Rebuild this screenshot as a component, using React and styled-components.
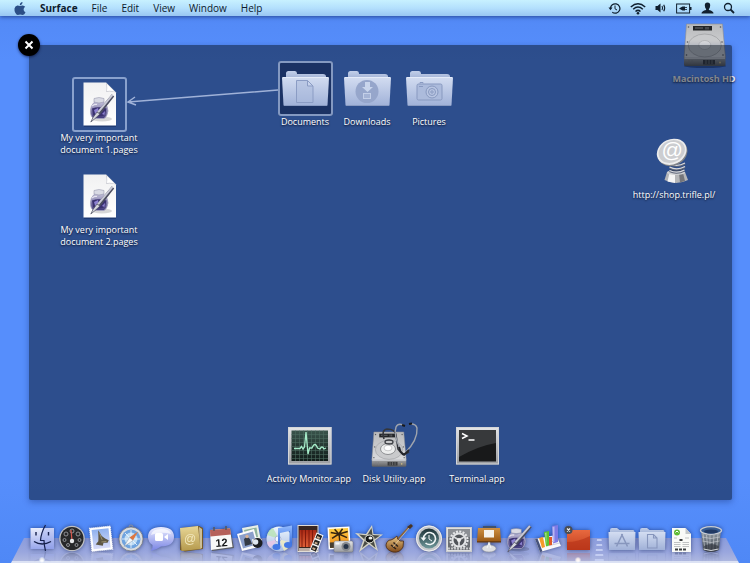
import React from "react";
import styled, { createGlobalStyle, css } from "styled-components";

const GlobalStyle = createGlobalStyle`
  * {
    box-sizing: border-box;
  }

  body {
    margin: 0;
    font-family: "Open Sans", "Noto Sans", sans-serif;
    background: #568efc;
  }

  button {
    margin: 0;
    padding: 0;
    border: 0;
    background: none;
    font: inherit;
    color: inherit;
    cursor: default;
  }
`;

const Desktop = styled.div`
  display: flex;
  flex-direction: column;
  min-height: 100vh;
  overflow: hidden;
  background: linear-gradient(#5288f4, #568efc 60px, #568efc 85%, #4f88f6);
`;

const MenuBar = styled.header`
  display: flex;
  align-items: center;
  justify-content: space-between;
  height: 16px;
  padding: 0 15px 0 14px;
  background: linear-gradient(#c8f1ff, #b4e0fd 50%, #98c6f2);
  box-shadow: 0 1px 4px rgba(10, 30, 90, 0.6);
`;

const Menus = styled.nav`
  display: flex;
  align-items: center;
  gap: 14px;
  font-size: 10px;
  line-height: 16px;
  color: #0c1a2c;
`;

const MenuButton = styled.button`
  font-weight: ${(props) => (props.$bold ? 700 : 500)};
`;

const StatusIcons = styled.div`
  display: flex;
  align-items: center;
  gap: 9px;
  color: #10202f;
`;

const StatusButton = styled.button`
  display: flex;

  svg {
    display: block;
  }
`;

const Stage = styled.main`
  position: relative;
  display: flex;
  flex: 1;
  padding: 29px 18px 0 29px;
`;

const Surface = styled.section`
  position: relative;
  flex: 1;
  min-height: 455px;
  border-radius: 2px;
  background: rgba(4, 13, 29, 0.5);
  box-shadow: 0 2px 6px rgba(10, 30, 90, 0.35);
`;

const CloseButton = styled.button`
  position: absolute;
  top: -11px;
  left: -11px;
  display: flex;
  width: 22px;
  height: 22px;
  border-radius: 50%;
  background: #000;
  box-shadow: 0 1px 3px rgba(0, 0, 30, 0.6);

  svg {
    margin: auto;
  }
`;

const DesktopItem = styled.button`
  position: absolute;
  top: ${(props) => props.$top}px;
  bottom: ${(props) => props.$bottom}px;
  left: ${(props) => props.$left}px;
  right: ${(props) => props.$right}px;
  display: flex;
  flex-direction: column;
  align-items: center;
  width: 90px;
`;

const IconFrame = styled.span`
  display: block;
  width: 55px;
  height: 55px;
  border-radius: 3px;

  ${(props) =>
    props.$selected &&
    css`
      box-shadow: inset 0 0 0 2px rgba(176, 196, 232, 0.7);
    `}

  ${(props) =>
    props.$active &&
    css`
      background: rgba(10, 22, 60, 0.5);
    `}

  svg {
    display: block;
    width: 55px;
    height: 55px;
  }
`;

const ItemLabel = styled.span`
  font-size: 9px;
  font-weight: ${(props) => (props.$bold ? 700 : 500)};
  line-height: 12px;
  color: #fff;
  text-align: center;
  white-space: pre-line;
  text-shadow: 0 1px 2px rgba(0, 0, 20, 0.8);
`;

const Arrow = styled.svg`
  position: absolute;
  top: 42px;
  left: 97px;
`;

const Dock = styled.footer`
  display: grid;
  height: 63px;
`;

const Shelf = styled.div`
  grid-area: 1 / 1;
  align-self: end;
  height: 25px;
  margin: 0 11px;
  background: linear-gradient(#8b9cdc, #99a6de 55%, #adb7e0 92%, #dce2f4 93%);
  clip-path: polygon(13px 0, calc(100% - 13px) 0, 100% 100%, 0 100%);
`;

const DockItems = styled.div`
  z-index: 1;
  grid-area: 1 / 1;
  display: flex;
  align-items: flex-end;
  padding: 0 24px 0 27px;
`;

const DockItem = styled.button`
  display: flex;
  flex: 1;
  flex-direction: column;
  align-items: center;
  gap: 4px;
`;

const DockIcon = styled.svg`
  width: 28px;
  height: 28px;
  overflow: visible;
  filter: drop-shadow(0 0 2px rgba(10, 25, 80, 0.6));
  -webkit-box-reflect: below -3px linear-gradient(transparent 55%, rgba(0, 0, 0, 0.3));
`;

const RunningLight = styled.span`
  width: 6px;
  height: 6px;
  border-radius: 50%;
  background: ${(props) => (props.$on ? "radial-gradient(#fff 30%, rgba(190, 220, 255, 0.2) 80%)" : "none")};
`;

const Divider = styled.span`
  align-self: flex-end;
  width: 14px;
  height: 24px;
  background: repeating-linear-gradient(#c3cdf2 0 2px, transparent 2px 5px);
  clip-path: polygon(30% 0, 62% 0, 80% 100%, 12% 100%);
`;

const gradients = [
  ["gFolder", "#d3ddf1", "#a0b1d8"],
  ["gFolderBack", "#c2cfe9", "#98aad0"],
  ["gPaper", "#f1f1f2", "#ffffff"],
  ["gMetal", "#e4e5e7", "#9b9da1"],
  ["gDrive", "#b9babc", "#dadbdd"],
  ["gDriveFront", "#a0a1a3", "#5d5e61"],
  ["gInk", "#c2bfda", "#40387a"],
  ["gGreen", "#3a544c", "#101b19"],
  ["gFinder", "#e9edfc", "#98a7ec"],
  ["gBubble", "#eceeff", "#7782e4"],
  ["gBook", "#e8d797", "#b5994c"],
  ["gDisc", "#eef7ff", "#a9bce2"],
  ["gNote", "#91baff", "#2c64d8"],
  ["gSky", "#8fb1ef", "#d8dbf8"],
  ["gSunset", "#ffcf42", "#ee8418"],
  ["gRed", "#e8693f", "#c23f1f"],
  ["gCurtain", "#a92915", "#df6038"],
  ["gGuitar", "#ecc985", "#7d4718"],
  ["gTeal", "#1c3136", "#6f989b"],
  ["gWood", "#cf9144", "#9b5b18"],
  ["gBin", "#98a1ab", "#3d444e"],
];

function Gradients() {
  return (
    <svg width="0" height="0" display="block" aria-hidden="true">
      <defs>
        {gradients.map(([id, from, to]) => (
          <linearGradient key={id} id={id} x1="0" y1="0" x2="0" y2="1">
            <stop offset="0" stopColor={from} />
            <stop offset="1" stopColor={to} />
          </linearGradient>
        ))}
      </defs>
    </svg>
  );
}

/* ---------- desktop icons, 55 x 55 ---------- */

// ink bottle with a fountain pen across it, drawn in a 24 x 28 box
function InkAndPen() {
  return (
    <g>
      <ellipse cx="13" cy="24" rx="10" ry="2.5" fill="#000" opacity="0.15" />
      <path d="M5 3.5 Q10 1.5 15 3.5 L15 7 Q10 9 5 7Z" fill="#d9dae4" stroke="#8d8fa4" strokeWidth="0.5" />
      <path d="M5 7.5 Q10 9.5 15 7.5 Q19 11 19 16 Q18 22 15 23.5 L5 23.5 Q1.5 22 1.5 16 Q1.5 11 5 7.5Z" fill="url(#gInk)" stroke="#a5a3c0" strokeWidth="0.9" />
      <path d="M3 13.500 Q10 11 17.500 13.500 L16 20 Q10 23 4 20Z" fill="#3a3170" />
      <path d="M5 15 L9 13 L10 17 L6.500 20Z" fill="#8d82d0" />
      <path d="M13 19 L16 16 L15.500 20Z" fill="#8d82d0" />
      <path d="M3.2 11 Q5 9 8 9.5" fill="none" stroke="#fff" strokeWidth="1.2" opacity="0.7" />
      <path d="M22.800 -0.800 L25.200 1.400 L11.200 19.200 L8 17Z" fill="#4c4e60" />
      <path d="M22.800 -0.800 L24.200 0.500 L9.800 18 L8 17Z" fill="#c9cad6" />
      <path d="M8 17 L11 19 L5.5 24 L1.8 27 L4 22.5Z" fill="#d6d7de" stroke="#4b4c5d" strokeWidth="0.7" />
    </g>
  );
}

function PagesDocument() {
  return (
    <svg viewBox="0 0 55 55">
      <path d="M12 6 H34 L44 16 V49 H12Z" fill="#0a1a46" opacity="0.35" transform="translate(0 1)" />
      <path d="M11.500 5.500 H34 L44 15.500 V48.500 H11.500Z" fill="url(#gPaper)" />
      <path d="M34 5.500 Q35 13 34 15 Q38 14 44 15.500Z" fill="#c9cad1" />
      <path d="M35 7 Q35.500 12 35 14 Q39 13 43 15Z" fill="#fff" />
      <g transform="translate(17 18)">
        <InkAndPen />
      </g>
    </svg>
  );
}

function FolderShape() {
  return (
    <g>
      <path d="M8 19 V12.500 Q8 10 10.500 10 H17 Q19 10 19 12.500 V13 H45 Q48 13 48 15.500 V20 H8Z" fill="url(#gFolderBack)" />
      <path d="M5 16 H50 Q51 16 51 17 L49.500 44 Q49.400 45 48.500 45 H6.500 Q5.600 45 5.500 44 L4 17 Q4 16 5 16Z" fill="url(#gFolder)" />
      <path d="M5 16.500 H50" stroke="#e9effb" strokeWidth="0.8" />
      <path d="M6 44.500 H49" stroke="#8395bd" strokeWidth="0.8" />
    </g>
  );
}

function DocumentsFolder() {
  return (
    <svg viewBox="0 0 55 55">
      <FolderShape />
      <path d="M18.500 19.500 H29.500 L35 25 V41.500 H18.500Z M29.500 19.500 V25 H35" fill="#a9b9dc" fillOpacity="0.5" stroke="#8b9cc4" strokeWidth="1" />
    </svg>
  );
}

function DownloadsFolder() {
  return (
    <svg viewBox="0 0 55 55">
      <FolderShape />
      <circle cx="27" cy="30.500" r="11.500" fill="#96a6cb" />
      <path d="M25 21 H30 V26 H33 L27.500 31 L22 26 H25Z" fill="#c9d5ec" />
      <rect x="23.500" y="32.500" width="7" height="5" fill="#a4b3d5" stroke="#c3cfe8" />
    </svg>
  );
}

function PicturesFolder() {
  return (
    <svg viewBox="0 0 55 55">
      <FolderShape />
      <g fill="none" stroke="#8899c0">
        <rect x="15" y="23" width="25" height="16" rx="1.500" fill="#acbbdc" />
        <path d="M18 22.500 V21.500 H21 V22.500" />
        <circle cx="30" cy="31" r="6" fill="#b8c5e2" />
        <circle cx="30" cy="31" r="3.500" />
        <circle cx="30" cy="31" r="1.200" />
        <path d="M17 25.500 H21" />
      </g>
    </svg>
  );
}

function DriveBody() {
  return (
    <g>
      <path d="M9.500 6 H45.500 L48.500 40 H7Z" fill="url(#gDrive)" stroke="#8b8c8f" strokeWidth="0.6" />
      <path d="M7 40 H48.500 V46.500 Q48.500 48 47 48 H8.500 Q7 48 7 46.500Z" fill="url(#gDriveFront)" />
      <path d="M7.500 40.300 H48" stroke="#efeff0" strokeWidth="0.7" />
      <ellipse cx="27.800" cy="27.500" rx="16.500" ry="11.500" fill="#c9cacc" stroke="#a1a2a5" strokeWidth="0.8" />
      <ellipse cx="27.800" cy="27" rx="6" ry="4.500" fill="#d8d9db" stroke="#b0b1b4" strokeWidth="0.8" />
      <rect x="16" y="8" width="19" height="4.500" fill="#222427" />
      <path d="M18 10 H26 M29 9 V11.500 M31 9 V11.500" stroke="#8d9094" strokeWidth="0.7" />
      <g fill="#57585b">
        <circle cx="11.500" cy="9" r="0.800" />
        <circle cx="43.500" cy="9" r="0.800" />
        <circle cx="10.500" cy="24" r="0.800" />
        <circle cx="45" cy="24" r="0.800" />
        <circle cx="9.500" cy="37" r="0.800" />
        <circle cx="46" cy="37" r="0.800" />
      </g>
      <path d="M26 42 H38 V46.500 H26Z" fill="#3a3b3e" />
      <path d="M29 42 V46 M32 42 V46 M35 42 V46" stroke="#7e8083" strokeWidth="0.8" />
      <path d="M12 42 V46 M15 42 V46" stroke="#7d7e81" strokeWidth="0.6" />
      <circle cx="43" cy="44.500" r="1" fill="#c7b787" />
    </g>
  );
}

function HardDrive() {
  return (
    <svg viewBox="0 0 55 55">
      <ellipse cx="28" cy="48" rx="21" ry="2" fill="#001040" opacity="0.4" />
      <DriveBody />
    </svg>
  );
}

function WebLocation() {
  return (
    <svg viewBox="0 0 55 55">
      <path d="M20 38 Q29 35 38 38 L41 46 Q29 52 17.500 46Z" fill="#b4b5b8" />
      <path d="M22.500 39 L20.500 47.500 L28 49 V39Z" fill="#f4f4f5" />
      <path d="M32 39 H36 L38 47 L33 48.500Z" fill="#74757a" />
      <ellipse cx="29" cy="38.500" rx="9" ry="2.500" fill="#cfd0d3" />
      <ellipse cx="30" cy="36" rx="7" ry="2" fill="#33415f" />
      <g fill="none" stroke="#5b6377" strokeWidth="2.200">
        <path d="M22.500 30 Q30 34 38 29.500 M22.500 33.500 Q30 37.500 38 33 M22.500 37 Q30 40.500 37.500 36.500" />
      </g>
      <g fill="none" stroke="#d7d9df" strokeWidth="1.300">
        <path d="M22.500 29.500 Q30 33.500 38 29 M22.500 33 Q30 37 38 32.500 M22.500 36.500 Q30 40 37.500 36" />
      </g>
      <ellipse cx="25.500" cy="18.800" rx="15.400" ry="12.800" transform="rotate(-26 25.500 18.800)" fill="#808287" />
      <ellipse cx="24.700" cy="17.800" rx="15.400" ry="12.500" transform="rotate(-26 24.700 17.800)" fill="#ececed" />
      <ellipse cx="24.700" cy="17.500" rx="13.600" ry="10.800" transform="rotate(-26 24.700 17.500)" fill="#cccdd0" />
      <text x="25" y="23" fontSize="21" fontFamily="Liberation Sans, sans-serif" fontStyle="italic" textAnchor="middle" fill="#fff">
        @
      </text>
    </svg>
  );
}

function ActivityMonitor() {
  return (
    <svg viewBox="0 0 55 55">
      <rect x="6" y="9" width="43.500" height="37.500" fill="url(#gMetal)" />
      <rect x="6.500" y="9.500" width="42.500" height="36.500" fill="none" stroke="#d4d6d9" />
      <rect x="9.500" y="12.500" width="36.500" height="30.500" fill="url(#gGreen)" />
      <path
        d="M13.500 12.500 V43 M17.500 12.500 V43 M21.500 12.500 V43 M25.500 12.500 V43 M29.500 12.500 V43 M33.500 12.500 V43 M37.500 12.500 V43 M41.500 12.500 V43 M9.500 16.500 H46 M9.500 20.500 H46 M9.500 24.500 H46 M9.500 28.500 H46 M9.500 32.500 H46 M9.500 36.500 H46 M9.500 40.500 H46"
        stroke="#4b6b5f"
        strokeWidth="0.6"
      />
      <path d="M12 30.500 H18 L19.500 28.500 L21 31 L22.500 29 L24 14 L26 36 L27.500 30 H30 Q33 23 35.500 30 L38 31 Q40 27 42 31 L44 30" fill="none" stroke="#a6ecc9" strokeWidth="1.300" />
    </svg>
  );
}

function Terminal() {
  return (
    <svg viewBox="0 0 55 55">
      <rect x="6" y="9" width="43" height="37.500" fill="url(#gMetal)" />
      <rect x="6.500" y="9.500" width="42" height="36.500" fill="none" stroke="#d4d6d9" />
      <rect x="9" y="12" width="37" height="31.500" fill="#18191a" />
      <path d="M9 12 H46 V25 Q28 28 9 39Z" fill="#37393b" />
      <path d="M12 15.500 L17 18 L12 20.500" fill="none" stroke="#fff" strokeWidth="1.500" />
      <path d="M18.500 22 H24.500" stroke="#fff" strokeWidth="1.500" />
    </svg>
  );
}

function DiskUtility() {
  return (
    <svg viewBox="0 0 55 55">
      <g transform="translate(-1 9) scale(0.83)">
        <DriveBody />
      </g>
      <ellipse cx="21" cy="31" rx="7.500" ry="5.500" fill="#eceded" stroke="#8d8f92" />
      <ellipse cx="21" cy="30" rx="4" ry="2.800" fill="#fff" stroke="#b5b6b8" strokeWidth="0.7" />
      <path d="M17 21 Q14 12 20 11 Q28 11 29 17 L31 31 Q36 39 42 34" fill="none" stroke="#34363c" strokeWidth="1.600" />
      <ellipse cx="22" cy="24" rx="4" ry="2" fill="none" stroke="#3c3e43" strokeWidth="1.300" />
      <path d="M34 32 Q26 17 29 9 Q31 5 36 7 M38 35 Q51 22 50 10 Q49 6 44 6" fill="none" stroke="#9fa4ad" strokeWidth="1.400" />
      <path d="M35 7 L38 8 M42 6 L45 5.500" stroke="#17191d" strokeWidth="2" />
      <path d="M32 29 Q34 36 37 37 L42 32" fill="none" stroke="#24262b" strokeWidth="1.800" />
    </svg>
  );
}

/* ---------- dock icons, 28 x 28 ---------- */

function Finder() {
  return (
    <g>
      <rect x="2.500" y="3" width="23.500" height="21" fill="url(#gFinder)" />
      <path d="M15 3 H26 V24 H17 L16 18 H13 Q13 9 15 3Z" fill="#7f90e4" opacity="0.3" />
      <path d="M17.500 0 Q13 8 12.500 15.500 H16 Q16 20 17.500 26" fill="none" stroke="#15204c" strokeWidth="1.200" />
      <path d="M8 7 V10.500 M20.500 7 V10.500 M6 16.500 Q14 21.500 23 16.500" fill="none" stroke="#15204c" strokeWidth="1.400" />
    </g>
  );
}

function Dashboard() {
  return (
    <g>
      <circle cx="14" cy="13.500" r="12.800" fill="#bfc0c3" />
      <circle cx="14" cy="13.500" r="11.500" fill="#27282a" />
      <g fill="none" stroke="#999b9f" strokeWidth="0.9">
        <circle cx="14" cy="6" r="2" />
        <circle cx="8" cy="9" r="2" />
        <circle cx="20" cy="9" r="2" />
        <circle cx="6.500" cy="15" r="1.500" />
        <circle cx="21.500" cy="15" r="1.500" />
        <circle cx="10" cy="20" r="1.500" />
        <circle cx="18.500" cy="20" r="1.500" />
      </g>
      <path d="M14 16 L13 5" stroke="#d9564a" strokeWidth="1.200" />
      <circle cx="14" cy="16" r="2.200" fill="#e7e8ea" />
    </g>
  );
}

function Mail() {
  return (
    <g transform="rotate(-6 14 13)">
      <rect x="3.500" y="2" width="21" height="23.500" fill="#fff" stroke="#eef0fa" strokeDasharray="1 1" />
      <rect x="5.500" y="4" width="17" height="19.500" fill="url(#gSky)" />
      <path d="M12 5 L15 11 L18 14 L21.500 16 L20 18.500 L16 18 L15 21 L12 20 L8 19 L11 16 L11.500 12Z" fill="#5d5644" />
      <path d="M13 8 L15 15 M14 17 L19 17" stroke="#9c906f" strokeWidth="0.9" />
    </g>
  );
}

function Safari() {
  return (
    <g>
      <circle cx="14" cy="2" r="2" fill="none" stroke="#8c8f96" />
      <circle cx="14" cy="14" r="12" fill="#dadcdf" stroke="#777b83" strokeWidth="0.8" />
      <circle cx="14" cy="14" r="9.500" fill="#6fa3df" />
      <circle cx="14" cy="14" r="6.500" fill="#bedcf5" />
      <path d="M14 5 V23 M5 14 H23 M8 8 L20 20" stroke="#f1f7fd" strokeWidth="0.8" />
      <path d="M21 6.500 L16 15.500 L12.500 12.500Z" fill="#de763e" />
      <path d="M7 21.500 L12.500 12.500 L16 15.500Z" fill="#f6f7f8" stroke="#73889e" strokeWidth="0.4" />
    </g>
  );
}

function IChat() {
  return (
    <g>
      <path d="M14 2 Q27 2 27 12 Q27 21 14 21.500 Q9 25 4 26 Q6 23 5.500 20 Q1 17 1 12 Q1 2 14 2Z" fill="url(#gBubble)" />
      <path d="M4 10 Q5 4 14 4 Q23 4 24 9 Q14 6 4 10Z" fill="#fff" opacity="0.65" />
      <rect x="8" y="8" width="8" height="8" rx="1.500" fill="#fff" />
      <path d="M17 12 L21 9 V15Z" fill="#fff" />
    </g>
  );
}

function AddressBook() {
  return (
    <g>
      <path d="M4 3 L22 1 L26 3 V24 L8 26.500 L3 25Z" fill="#755a28" />
      <path d="M22 2 L25 4 V23 L23 24Z" fill="#cdbf96" />
      <path d="M3 3 L21 1 L23.500 24 L4.500 26Z" fill="url(#gBook)" />
      <text x="13" y="17.500" textAnchor="middle" fontSize="12" fontFamily="Liberation Sans, sans-serif" fill="#f1e6ba">
        @
      </text>
    </g>
  );
}

function Calendar() {
  return (
    <g>
      <path d="M4 5 L23 3 L27 23 L5 26Z" fill="#5c5e63" />
      <path d="M3 5 L23 3.500 L25.500 22 L4 25Z" fill="#f8f8f8" />
      <path d="M3 5 L23 3.500 L24 9.500 L3.300 11.500Z" fill="#b5605a" />
      <path d="M7 2 V6 M19 1 V5" stroke="#55575c" strokeWidth="1.500" />
      <text x="14.500" y="21.500" transform="rotate(-4 14 18)" textAnchor="middle" fontSize="11" fontWeight="700" fontFamily="Liberation Sans, sans-serif" fill="#17181a">
        12
      </text>
    </g>
  );
}

function Preview() {
  return (
    <g>
      <path d="M6 3 L22 0 L25 16 L9 19Z" fill="#e7efe7" />
      <path d="M8 5 L20.500 2.500 L22 12 L10 14Z" fill="#8fb39c" />
      <path d="M1 9 L18 4 L23 22 L6 26Z" fill="#fbfbfc" />
      <path d="M3 10.500 L17 6.500 L20.500 19.500 L7 23.500Z" fill="#8b9fcb" />
      <path d="M8 14 L11 11.500 L14 14 L16 19 L9 21Z" fill="#343a45" />
      <circle cx="11" cy="11.500" r="1.700" fill="#d8b295" />
      <path d="M16 14 H26 V20 H16Z" fill="#dfe2e8" />
      <circle cx="21.500" cy="18" r="5" fill="#1b1d22" />
      <circle cx="19.500" cy="17" r="2.800" fill="#dfe6f0" />
    </g>
  );
}

function ITunes() {
  return (
    <g>
      <circle cx="13" cy="14" r="12.500" fill="url(#gDisc)" />
      <path d="M13 14 L1 10 Q3 4 7 3Z" fill="#b6e2b3" opacity="0.8" />
      <path d="M13 14 L4 23 Q1 20 1 17Z" fill="#e6c6e7" opacity="0.9" />
      <path d="M13 14 L18 26 Q23 24 25 18Z" fill="#f3eebe" opacity="0.8" />
      <circle cx="12" cy="14" r="3" fill="#f5f7ff" stroke="#9fadd0" strokeWidth="0.8" />
      <path d="M12 3 L26 0.500 V20 H23.500 V6 L14 8 V22 H12Z" fill="url(#gNote)" />
      <ellipse cx="10.500" cy="22" rx="4" ry="3" fill="#4378e5" />
      <ellipse cx="22" cy="20" rx="4" ry="3" fill="#4378e5" />
    </g>
  );
}

function PhotoBooth() {
  return (
    <g>
      <rect x="1.500" y="0" width="21" height="27" fill="#e1dcd6" />
      <rect x="2.500" y="1" width="19" height="25" fill="#392620" />
      <rect x="3.500" y="5" width="17" height="17" fill="url(#gCurtain)" />
      <path d="M6 5 V22 M9.500 5 V22 M13 5 V22 M16.500 5 V22" stroke="#78150a" strokeWidth="0.9" />
      <path d="M3 23 H21 V26 H3Z" fill="#bcaea6" />
      <g transform="rotate(22 20 17)">
        <rect x="17" y="8" width="7.500" height="19" fill="#f7f7f7" />
        <path d="M18 9 H23.500 V13.500 H18Z M18 15 H23.500 V19.500 H18Z M18 21 H23.500 V26 H18Z" fill="#24231f" />
        <path d="M19 12 H22 M19 18 H22 M19 24 H22" stroke="#c8aa8c" strokeWidth="2" />
      </g>
    </g>
  );
}

function IPhoto() {
  return (
    <g>
      <g transform="rotate(-3 13 12)">
        <rect x="2" y="2" width="22" height="22" fill="#fff" />
        <rect x="3.500" y="3.500" width="19" height="19" fill="url(#gSunset)" />
        <path d="M13 22 Q14 14 13 9 M13 9 L5 7 M13 9 L6 13 M13 9 L9 4 M13 9 L17 4 M13 9 L22 7 M13 9 L21 13" fill="none" stroke="#362510" strokeWidth="1.500" />
        <path d="M3.500 17 H22.500 V22.500 H3.500Z" fill="#483f31" />
      </g>
      <rect x="8" y="16" width="19" height="11" rx="1.500" fill="url(#gMetal)" stroke="#74777c" strokeWidth="0.5" />
      <circle cx="20" cy="21.500" r="4.500" fill="#85888e" />
      <circle cx="20" cy="21.500" r="2.500" fill="#26344a" />
      <rect x="9.500" y="17.500" width="4" height="2" fill="#f6f6f7" />
    </g>
  );
}

function IMovie() {
  return (
    <g>
      <path d="M17 0 L18.500 9 L28 9.500 L20 15.500 L23 26 L14 19.500 L4 27 L8 15.500 L0 8 L11 9Z" fill="#d3d2c5" />
      <path d="M16.500 3 L17.500 10 L25 10.500 L18.500 15 L20.500 23 L14 17.500 L7 23 L10 15 L4 9.500 L12 10.500Z" fill="#4a4c45" />
      <ellipse cx="14.500" cy="14" rx="4.500" ry="4" fill="#151716" stroke="#f4f3e7" strokeWidth="1" />
      <ellipse cx="15.500" cy="13" rx="2" ry="1.500" fill="#eff1eb" />
    </g>
  );
}

function GarageBand() {
  return (
    <g>
      <path d="M11 16 L25 1" stroke="#8a6238" strokeWidth="1.800" />
      <path d="M22 2 L26 -1 L28 1 L25 4Z" fill="#4a3423" />
      <path d="M12 11 L12.500 14 Q15 17 18.500 16 L18 22 Q15 28 8 27 Q1 25 1 20 Q2 15 6 15 Q9 14 12 11Z" fill="url(#gGuitar)" stroke="#4e2b10" strokeWidth="0.8" />
      <path d="M6 20 L11 24 M8.500 17.500 L13 21.500" stroke="#2d2119" strokeWidth="1.500" />
      <path d="M8 22 L24 3" stroke="#f0dfbe" strokeWidth="0.6" />
    </g>
  );
}

function TimeMachine() {
  return (
    <g>
      <circle cx="14" cy="13.500" r="13" fill="#c6c8cb" />
      <circle cx="14" cy="13.500" r="12.500" fill="none" stroke="#eeeff0" />
      <circle cx="14" cy="13.500" r="10" fill="url(#gTeal)" />
      <path d="M8.500 13.500 A6 6 0 1 1 10.500 18" fill="none" stroke="#f2f7f7" strokeWidth="1.600" />
      <path d="M5.500 12.500 H11.500 L8.500 16Z" fill="#f2f7f7" />
      <path d="M14 10 V14 L17 16" fill="none" stroke="#f2f7f7" strokeWidth="1" />
    </g>
  );
}

function SystemPreferences() {
  return (
    <g>
      <rect x="1" y="2" width="26" height="25" fill="#c8cacd" />
      <rect x="2.500" y="3.500" width="23" height="22" fill="#6c6f74" stroke="#efeff0" strokeWidth="0.8" />
      <path d="M3 4 H25 V12 H3Z" fill="#8c8f94" />
      <circle cx="14" cy="15" r="8.500" fill="none" stroke="#e6e7e9" strokeWidth="2.200" strokeDasharray="2 1.340" />
      <circle cx="14" cy="15" r="6.500" fill="#515459" stroke="#e3e4e6" strokeWidth="2" />
      <path d="M14 15 V21 M14 15 L9 12 M14 15 L19 12" stroke="#d7d8da" strokeWidth="1.800" />
      <circle cx="14" cy="15" r="2" fill="#efeff0" />
      <path d="M3 23.500 H25" stroke="#c7c8ca" strokeWidth="2" strokeDasharray="2 1" />
    </g>
  );
}

function Keynote() {
  return (
    <g>
      <path d="M8 1 H21 V4 H8Z" fill="#40526e" />
      <path d="M3 3 H25 L26 16 H2Z" fill="url(#gWood)" />
      <path d="M2 16 H26 V17.500 H2Z" fill="#6d3e12" />
      <rect x="9" y="5" width="10" height="7.500" fill="#f4f2ee" />
      <path d="M13 17.500 H15.500 V23 H13Z" fill="#9a9da3" />
      <ellipse cx="14" cy="23.500" rx="7" ry="3.500" fill="#dedfe3" stroke="#9a9da5" strokeWidth="0.6" />
      <path d="M12 23 L14 18 L16 23" fill="none" stroke="#f3f4f6" strokeWidth="1.200" />
    </g>
  );
}

function Pages() {
  return (
    <g transform="translate(2 1) scale(1.020 0.960)">
      <InkAndPen />
    </g>
  );
}

function Numbers() {
  return (
    <g>
      <path d="M1 14 L22 10 L27 21 L6 27Z" fill="#f9f9fa" />
      <path d="M1 14 L6 27 L8.500 26.500 L3.500 13.500Z" fill="#46527a" />
      <path d="M12 18 L25 15 M13 21 L26 18" stroke="#b6bccb" strokeWidth="0.7" />
      <path d="M5 13 L9 12 L11 22 L8 23Z" fill="#f39a28" />
      <path d="M10 7 L15 6 V20.500 L12 21.500Z" fill="#5cc431" />
      <path d="M15 12 L18 12 V20 L15 20.500Z" fill="#e15a28" />
      <path d="M18 1 L24 0 V17 L19 18.500Z" fill="#7f7be6" />
      <path d="M18.500 2 L20.500 1.500 V17 L19 17.500Z M11 8 L12.500 7.500 V20Z" fill="#fff" opacity="0.45" />
    </g>
  );
}

function SurfaceApp() {
  return (
    <g>
      <rect x="3" y="5" width="23" height="20" fill="url(#gRed)" />
      <path d="M3 17 Q14 17 26 11 V25 H3Z" fill="#b53218" opacity="0.6" />
      <circle cx="4.500" cy="5" r="4" fill="#4b4d52" />
      <path d="M3 3.500 L6 6.500 M6 3.500 L3 6.500" stroke="#f2f2f2" strokeWidth="1.100" />
    </g>
  );
}

function DockFolder({ children }) {
  return (
    <g>
      <path d="M2 6 V5 Q2 3 4 3 H9 L11.500 5 H25 Q26.500 5 26.500 7 V10 H2Z" fill="url(#gFolderBack)" />
      <path d="M0.500 7 H27.500 L27 25 H1Z" fill="url(#gFolder)" />
      <g fill="none" stroke="#8796bd" strokeWidth="1.100">
        {children}
      </g>
    </g>
  );
}

function ApplicationsStack() {
  return (
    <DockFolder>
      <path d="M14.500 9 L8.500 21.500 M13.500 9 L19.500 21.500 M6.500 18.500 H21.500" strokeWidth="1.500" />
    </DockFolder>
  );
}

function DocumentsStack() {
  return (
    <DockFolder>
      <path d="M9.500 9.500 H15.500 L19 13 V23 H9.500Z M15.500 9.500 V13 H19" />
    </DockFolder>
  );
}

function PaperStack() {
  return (
    <g>
      <path d="M5 3 H18.500 L24 9 V27 H5Z" fill="#f9faf8" />
      <path d="M18.500 3 V9 H24Z" fill="#c4c8ca" />
      <circle cx="10" cy="7.500" r="3" fill="#5ebb35" />
      <path d="M8.500 7.500 L10 6 L11.500 7.500" fill="none" stroke="#fff" />
      <path d="M7 13 H10 M18 13 H22 M7 17.500 H13.500 M15.500 17.500 H22 M7 19.500 H13.500 M15.500 19.500 H22 M7 21.500 H13.500 M15.500 21.500 H22" stroke="#b1b4b5" strokeWidth="0.8" />
      <path d="M12.500 15 H15.500 M8 24.500 H20" stroke="#3b3d3e" strokeWidth="2" strokeDasharray="3 1" />
    </g>
  );
}

function Trash() {
  return (
    <g>
      <path d="M4 5 L6 25 Q14 29 22 25 L24 5Z" fill="url(#gBin)" />
      <path d="M6 9 L8 25 M9.500 10 L11 26 M13 10 V26 M17 10 L16 26 M21 9 L19.500 25 M5 12 Q14 15 23 12 M5.500 16 Q14 19 22.500 16" fill="none" stroke="#ced2d7" strokeWidth="0.6" />
      <path d="M7 21 Q14 17 21.500 21 L21 25 Q14 28 7.500 25Z" fill="#363b43" opacity="0.7" />
      <path d="M6.500 24 Q14 27 21.500 24" fill="none" stroke="#d6d9dd" strokeWidth="1" />
      <ellipse cx="14" cy="5.500" rx="10.500" ry="3.800" fill="#365b91" stroke="#c8ccd2" strokeWidth="1.300" />
      <ellipse cx="14" cy="6.500" rx="7" ry="2" fill="#213963" />
    </g>
  );
}

/* ---------- menu bar icons ---------- */

function AppleLogo() {
  return (
    <svg width="12" height="13" viewBox="0 0 12 13" aria-hidden="true" display="block">
      <path
        d="M8.500 0 Q8.600 1.700 7.600 2.500 Q6.800 3.300 5.800 3.200 Q5.700 2 6.500 1.100 Q7.400 0.200 8.500 0Z M3.400 3.400 Q4.600 3.300 6 4 Q7.300 3.300 8.700 3.400 Q10.300 3.600 11.200 4.800 Q9.500 5.900 9.600 7.700 Q9.700 9.600 11.500 10.300 Q10.500 12.900 8.800 13 Q7.500 12.500 6.200 12.500 Q5 12.500 3.800 13 Q2.500 13 1.300 10.800 Q0.200 8.500 0.500 6.500 Q1 3.700 3.400 3.400Z"
        fill="#2c4f87"
      />
    </svg>
  );
}

function BackupStatus() {
  return (
    <svg width="13" height="13" viewBox="0 0 13 13" fill="none" stroke="currentColor">
      <path d="M2.500 6.500 A4.700 4.700 0 1 1 4.300 10.200" strokeWidth="1.200" />
      <path d="M0.500 5.500 H4.500 L2.500 8.300Z" fill="currentColor" stroke="none" />
      <path d="M7 3.500 V6.800 L9 8" strokeWidth="1" />
    </svg>
  );
}

function WifiStatus() {
  return (
    <svg width="16" height="13" viewBox="0 0 16 13" fill="none" stroke="currentColor" strokeWidth="1.500">
      <path d="M0.800 5 Q8 -1.500 15.200 5 M3.200 7.300 Q8 2.800 12.800 7.300 M5.500 9.500 Q8 7.200 10.500 9.500" />
      <circle cx="8" cy="11.200" r="1.300" fill="currentColor" stroke="none" />
    </svg>
  );
}

function VolumeStatus() {
  return (
    <svg width="12" height="12" viewBox="0 0 12 12" fill="none" stroke="currentColor" strokeWidth="1.100">
      <path d="M0.500 4 H2.500 L5.500 1.500 V10.500 L2.500 8 H0.500Z" fill="currentColor" stroke="none" />
      <path d="M7 4 Q8.200 6 7 8 M8.700 2.700 Q10.700 6 8.700 9.300" />
    </svg>
  );
}

function BatteryStatus() {
  return (
    <svg width="16" height="11" viewBox="0 0 16 11" fill="none" stroke="currentColor">
      <rect x="0.600" y="1" width="13" height="9" strokeWidth="1" />
      <path d="M14 4 H15.500 V7 H14Z" fill="currentColor" stroke="none" />
      <path d="M3 5.500 L6.500 3.500 H9 V7.500 H6.500Z" fill="currentColor" stroke="none" />
      <path d="M9 4.500 H11 M9 6.500 H11" strokeWidth="0.800" />
    </svg>
  );
}

function UserStatus() {
  return (
    <svg width="13" height="12" viewBox="0 0 13 12" fill="currentColor">
      <path d="M6.500 0.500 Q9.300 0.500 9.200 3.500 Q9 6 7.900 7 V8 Q12.500 9 12.500 11.500 H0.500 Q0.500 9 5.100 8 V7 Q4 6 3.800 3.500 Q3.700 0.500 6.500 0.500Z" />
    </svg>
  );
}

function SearchStatus() {
  return (
    <svg width="12" height="12" viewBox="0 0 12 12" fill="none" stroke="currentColor">
      <circle cx="5" cy="5" r="3.500" strokeWidth="1.300" />
      <path d="M7.500 7.500 L11 11" strokeWidth="1.800" />
    </svg>
  );
}

const menus = ["File", "Edit", "View", "Window", "Help"];

const statusItems = [
  { name: "Time Machine", Icon: BackupStatus },
  { name: "Wi-Fi", Icon: WifiStatus },
  { name: "Volume", Icon: VolumeStatus },
  { name: "Battery", Icon: BatteryStatus },
  { name: "User", Icon: UserStatus },
  { name: "Spotlight", Icon: SearchStatus },
];

const surfaceItems = [
  { label: "My very important\ndocument 1.pages", Icon: PagesDocument, left: 25, top: 32, selected: true },
  { label: "My very important\ndocument 2.pages", Icon: PagesDocument, left: 25, top: 124 },
  { label: "Documents", Icon: DocumentsFolder, left: 231, top: 16, selected: true, active: true },
  { label: "Downloads", Icon: DownloadsFolder, left: 293, top: 16 },
  { label: "Pictures", Icon: PicturesFolder, left: 355, top: 16 },
  { label: "http://shop.trifle.pl/", Icon: WebLocation, right: 13, top: 89 },
  { label: "Activity Monitor.app", Icon: ActivityMonitor, left: 235, bottom: 15 },
  { label: "Disk Utility.app", Icon: DiskUtility, left: 320, bottom: 15 },
  { label: "Terminal.app", Icon: Terminal, left: 403, bottom: 15 },
];

const dockApps = [
  { name: "Finder", Icon: Finder, running: true },
  { name: "Dashboard", Icon: Dashboard },
  { name: "Mail", Icon: Mail },
  { name: "Safari", Icon: Safari },
  { name: "iChat", Icon: IChat },
  { name: "Address Book", Icon: AddressBook },
  { name: "iCal", Icon: Calendar },
  { name: "Preview", Icon: Preview },
  { name: "iTunes", Icon: ITunes },
  { name: "Photo Booth", Icon: PhotoBooth },
  { name: "iPhoto", Icon: IPhoto },
  { name: "iMovie", Icon: IMovie },
  { name: "GarageBand", Icon: GarageBand },
  { name: "Time Machine", Icon: TimeMachine },
  { name: "System Preferences", Icon: SystemPreferences },
  { name: "Keynote", Icon: Keynote },
  { name: "Pages", Icon: Pages },
  { name: "Numbers", Icon: Numbers },
  { name: "Surface", Icon: SurfaceApp, running: true },
];

const dockStacks = [
  { name: "Applications", Icon: ApplicationsStack },
  { name: "Documents", Icon: DocumentsStack },
  { name: "Paper", Icon: PaperStack },
  { name: "Trash", Icon: Trash },
];

function Item({ item }) {
  const { Icon } = item;
  return (
    <DesktopItem $top={item.top} $bottom={item.bottom} $left={item.left} $right={item.right}>
      <IconFrame $selected={item.selected} $active={item.active}>
        <Icon />
      </IconFrame>
      <ItemLabel $bold={item.bold}>{item.label}</ItemLabel>
    </DesktopItem>
  );
}

function DockEntry({ name, Icon, running }) {
  return (
    <DockItem aria-label={name}>
      <DockIcon viewBox="0 0 28 28">
        <Icon />
      </DockIcon>
      <RunningLight $on={running} />
    </DockItem>
  );
}

export default function App() {
  return (
    <>
      <GlobalStyle />
      <Gradients />
      <Desktop>
        <MenuBar>
          <Menus>
            <MenuButton aria-label="Apple menu">
              <AppleLogo />
            </MenuButton>
            <MenuButton $bold>Surface</MenuButton>
            {menus.map((menu) => (
              <MenuButton key={menu}>{menu}</MenuButton>
            ))}
          </Menus>
          <StatusIcons>
            {statusItems.map(({ name, Icon }) => (
              <StatusButton key={name} aria-label={name}>
                <Icon />
              </StatusButton>
            ))}
          </StatusIcons>
        </MenuBar>
        <Stage>
          <Item item={{ label: "Macintosh HD", Icon: HardDrive, right: 1, top: 2, bold: true }} />
          <Surface>
            {surfaceItems.map((item) => (
              <Item key={item.label} item={item} />
            ))}
            <Arrow width="152" height="22" viewBox="0 0 152 22" fill="none" stroke="#a0b2d8" strokeWidth="1.500">
              <path d="M152 3 L2 15 M9 10 L2 15 L10 18" />
            </Arrow>
            <CloseButton aria-label="Close">
              <svg width="10" height="10" viewBox="0 0 10 10" stroke="#fff" strokeWidth="2">
                <path d="M1.500 1.500 L8.500 8.500 M8.500 1.500 L1.500 8.500" />
              </svg>
            </CloseButton>
          </Surface>
        </Stage>
        <Dock>
          <Shelf />
          <DockItems>
            {dockApps.map((app) => (
              <DockEntry key={app.name} {...app} />
            ))}
            <Divider />
            {dockStacks.map((stack) => (
              <DockEntry key={stack.name} {...stack} />
            ))}
          </DockItems>
        </Dock>
      </Desktop>
    </>
  );
}
